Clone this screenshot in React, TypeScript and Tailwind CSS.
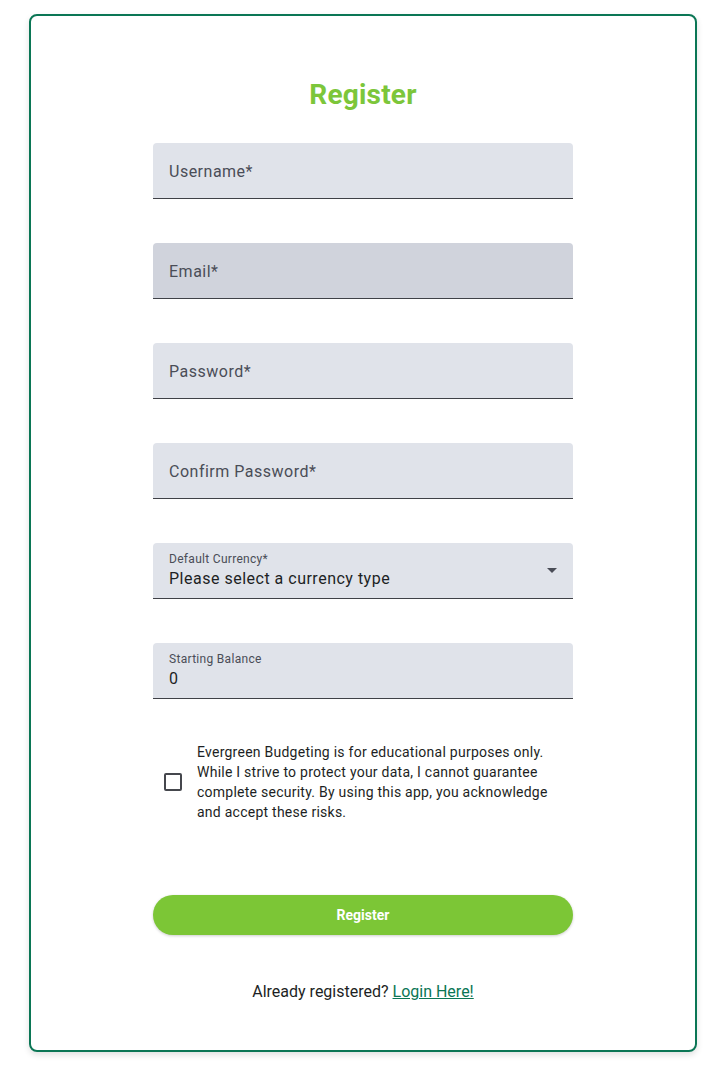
import React from "react";

function Field({ label, bg = "bg-[#e0e3ea]" }: { label: string; bg?: string }) {
  return (
    <div className={`h-[56px] w-full ${bg} rounded-t-[4px] border-b border-[#3f4147] flex items-center px-4`}>
      <span className="text-[16px] text-[#4a4d57] tracking-[0.5px] pt-[2px]">{label}</span>
    </div>
  );
}

export default function App() {
  return (
    <div className="min-h-[1076px] bg-white" style={{ fontFamily: "Roboto, 'Liberation Sans', sans-serif" }}>
      <div className="pt-[14px] pl-[29px]">
        <div className="w-[668px] h-[1038px] border-2 border-[#0b7655] rounded-[8px] shadow-[0_3px_6px_rgba(0,0,0,0.12)] flex flex-col items-center">
          <h1 className="mt-[61px] h-[36px] leading-[36px] text-[28px] font-bold text-[#7cc63a] tracking-[0.2px]">Register</h1>
          <div className="w-[420px] mt-[30px] flex flex-col gap-[44px]">
            <Field label="Username*" />
            <Field label="Email*" bg="bg-[#d0d3dc]" />
            <Field label="Password*" />
            <Field label="Confirm Password*" />
            <div className="h-[56px] w-full bg-[#e0e3ea] rounded-t-[4px] border-b border-[#3f4147] flex items-center px-4 relative">
              <div className="flex flex-col pt-[1px]">
                <span className="text-[12px] leading-[14px] text-[#4a4d57] tracking-[0.3px]">Default Currency*</span>
                <span className="text-[16px] leading-[24px] text-[#1d1f24] tracking-[0.5px] mt-[1px]">Please select a currency type</span>
              </div>
              <svg className="absolute right-[16px] top-[25px]" width="10" height="5" viewBox="0 0 10 5">
                <path d="M0 0 L5 5 L10 0 Z" fill="#4a4d57" />
              </svg>
            </div>
            <div className="h-[56px] w-full bg-[#e0e3ea] rounded-t-[4px] border-b border-[#3f4147] flex items-center px-4">
              <div className="flex flex-col pt-[1px]">
                <span className="text-[12px] leading-[14px] text-[#4a4d57] tracking-[0.3px]">Starting Balance</span>
                <span className="text-[16px] leading-[24px] text-[#1d1f24] tracking-[0.5px] mt-[1px]">0</span>
              </div>
            </div>
          </div>
          <div className="w-[420px] mt-[43px] flex items-center">
            <div className="w-[44px] flex justify-center pr-[4px]">
              <div className="w-[18px] h-[18px] border-2 border-[#45474d] rounded-[2px]" />
            </div>
            <p className="text-[14px] leading-[20px] text-[#1d1f24] w-[370px] tracking-[0.25px]">
              Evergreen Budgeting is for educational purposes only. While I strive to protect your data, I cannot guarantee complete security. By using this app, you acknowledge and accept these risks.
            </p>
          </div>
          <button className="mt-[73px] w-[420px] h-[40px] rounded-full bg-[#7cc636] text-white text-[14px] font-bold shadow-[0_1px_3px_rgba(0,0,0,0.2)]">
            Register
          </button>
          <p className="mt-[45px] text-[16px] leading-[24px] text-[#1d1f24]">
            Already registered?{" "}
            <a href="#" className="text-[#0b7655] underline">Login Here!</a>
          </p>
        </div>
      </div>
    </div>
  );
}
